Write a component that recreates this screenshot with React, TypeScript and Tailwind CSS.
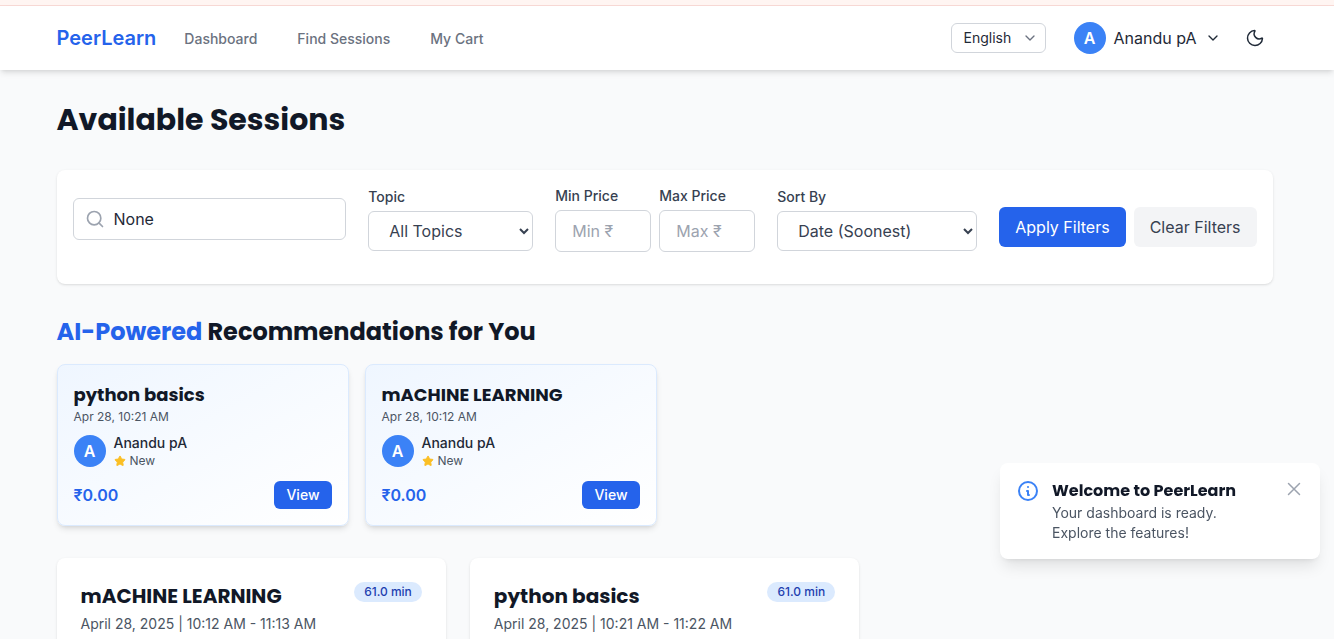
import React from "react";
import { ChevronDown, Moon, Search, Star } from "lucide-react";

const heading = "font-[family-name:Poppins,Inter,sans-serif] font-bold text-[#111827]";
const label = "mb-1 block text-sm font-medium text-[#374151]";
const field = "w-full rounded-md border border-[#d1d5db] bg-white px-4 text-base text-[#374151]";

function Avatar() {
  return (
    <span className="flex size-8 shrink-0 items-center justify-center rounded-full bg-[#3b82f6] text-base font-semibold text-white">
      A
    </span>
  );
}

function Header() {
  return (
    <header className="relative bg-white shadow-[0_4px_6px_-1px_rgba(0,0,0,0.1),0_2px_4px_-2px_rgba(0,0,0,0.1)]">
      <div className="pr-[5px]">
        <div className="mx-auto flex h-16 max-w-7xl items-center px-8">
          <a href="#home" className="text-xl font-semibold text-[#2563eb]">
            PeerLearn
          </a>
          <nav className="ml-7 flex gap-10 pt-0.5 text-sm font-medium text-[#6b7280]">
            <a href="#dashboard">Dashboard</a>
            <a href="#sessions">Find Sessions</a>
            <a href="#cart">My Cart</a>
          </nav>
          <div className="ml-auto flex items-center">
            <div className="grid items-center">
              <select
                aria-label="Language"
                defaultValue="English"
                className="col-start-1 row-start-1 h-[30px] w-[95px] appearance-none rounded-md border border-[#d1d5db] bg-white pl-3 text-sm text-[#1f2937]"
              >
                <option>English</option>
                <option>Hindi</option>
              </select>
              <ChevronDown className="pointer-events-none col-start-1 row-start-1 mr-2 size-4 justify-self-end text-[#6b7280]" />
            </div>
            <button type="button" className="ml-7 flex items-center gap-2 text-base text-[#1f2937]">
              <Avatar />
              <span>Anandu pA</span>
              <ChevronDown className="size-4" />
            </button>
            <button type="button" aria-label="Toggle dark mode" className="ml-4 p-2 text-[#1f2937]">
              <Moon className="size-5" strokeWidth={1.75} />
            </button>
          </div>
        </div>
      </div>
    </header>
  );
}

function Filters() {
  return (
    <form className="mt-8 rounded-lg bg-white p-4 shadow-[0_1px_3px_0_rgba(0,0,0,0.1),0_1px_2px_-1px_rgba(0,0,0,0.1)]">
      <div className="flex items-center gap-[22px] pb-4">
        <div className="grid flex-1 items-center">
          <input
            aria-label="Search sessions"
            defaultValue="None"
            className="col-start-1 row-start-1 h-[42px] w-full min-w-0 rounded-md border border-[#d1d5db] bg-white pl-10 text-base text-[#1f2937]"
          />
          <Search className="pointer-events-none col-start-1 row-start-1 ml-3 size-5 text-[#9ca3af]" />
        </div>
        <div className="w-[165px]">
          <label htmlFor="topic" className={label}>Topic</label>
          <select id="topic" className={`${field} h-10`}>
            <option>All Topics</option>
          </select>
        </div>
        <div className="flex gap-2">
          <div className="w-24">
            <label htmlFor="min" className={label}>Min Price</label>
            <input id="min" placeholder="Min ₹" className={`${field} h-[42px] placeholder:text-[#9ca3af]`} />
          </div>
          <div className="w-24">
            <label htmlFor="max" className={label}>Max Price</label>
            <input id="max" placeholder="Max ₹" className={`${field} h-[42px] placeholder:text-[#9ca3af]`} />
          </div>
        </div>
        <div className="w-[200px]">
          <label htmlFor="sort" className={label}>Sort By</label>
          <select id="sort" className={`${field} h-10`}>
            <option>Date (Soonest)</option>
          </select>
        </div>
        <div className="flex gap-2 pt-4">
          <button type="button" className="rounded-md bg-[#2563eb] px-4 py-2 text-base text-white">
            Apply Filters
          </button>
          <button type="button" className="rounded-md bg-[#f3f4f6] px-4 py-2 text-base text-[#374151]">
            Clear Filters
          </button>
        </div>
      </div>
    </form>
  );
}

function Recommendation({ title, date }: { title: string; date: string }) {
  return (
    <article className="rounded-lg border border-[#dbeafe] bg-linear-to-br/srgb from-[#eff6ff] to-white p-4 shadow-[0_4px_6px_-1px_rgba(0,0,0,0.1),0_2px_4px_-2px_rgba(0,0,0,0.1)]">
      <h3 className={`${heading} text-lg leading-7`}>{title}</h3>
      <p className="text-xs text-[#4b5563]">{date}</p>
      <div className="mt-2 flex items-center gap-2">
        <Avatar />
        <div>
          <p className="text-sm font-medium text-[#1f2937]">Anandu pA</p>
          <p className="flex items-center gap-1 text-xs text-[#4b5563]">
            <Star className="size-3 fill-current text-[#fbbf24]" aria-hidden="true" />
            New
          </p>
        </div>
      </div>
      <div className="mt-3 flex items-center justify-between">
        <span className="text-base font-semibold text-[#2563eb]">₹0.00</span>
        <button type="button" className="rounded-md bg-[#2563eb] px-3 py-1 text-sm font-medium text-white">
          View
        </button>
      </div>
    </article>
  );
}

function Session({ title, time }: { title: string; time: string }) {
  return (
    <article className="h-64 rounded-lg bg-white p-6 shadow-[0_1px_3px_0_rgba(0,0,0,0.1),0_1px_2px_-1px_rgba(0,0,0,0.1)]">
      <div className="flex items-start justify-between">
        <h3 className={`${heading} text-xl leading-7`}>{title}</h3>
        <span className="rounded-full bg-[#dbeafe] px-2.5 py-0.5 text-xs font-medium text-[#1e40af]">61.0 min</span>
      </div>
      <p className="mt-1 text-sm text-[#4b5563]">{time}</p>
    </article>
  );
}

function Toast() {
  return (
    <div
      role="status"
      className="fixed right-3.5 bottom-20 flex w-80 items-start rounded-lg bg-white p-4 shadow-[0_10px_15px_-3px_rgba(0,0,0,0.1),0_4px_6px_-4px_rgba(0,0,0,0.1)]"
    >
      <svg viewBox="0 0 24 24" className="size-6 shrink-0 fill-none stroke-[#3b82f6] stroke-2" strokeLinecap="round" strokeLinejoin="round" aria-hidden="true">
        <path d="M13 16h-1v-4h-1m1-4h.01M21 12a9 9 0 11-18 0 9 9 0 0118 0z" />
      </svg>
      <div className="ml-3 flex-1">
        <p className={`${heading} text-base leading-6`}>Welcome to PeerLearn</p>
        <p className="text-sm text-[#4b5563]">
          Your dashboard is ready.
          <br />
          Explore the features!
        </p>
      </div>
      <button type="button" aria-label="Close" className="text-[#9ca3af]">
        <svg viewBox="0 0 20 20" className="size-5 fill-none stroke-current stroke-[1.5]" strokeLinecap="round" aria-hidden="true">
          <path d="M4.5 4.5l11 11M15.5 4.5l-11 11" />
        </svg>
      </button>
    </div>
  );
}

export default function App() {
  return (
    <div className="h-screen overflow-hidden bg-[#f9fafb] font-[family-name:Inter,sans-serif]">
      <div className="h-1.5 border-b border-[#f8d9d5] bg-[#fff5f2]" />
      <Header />
      <div className="pr-[5px]">
        <main className="mx-auto max-w-7xl px-8 pt-8">
          <h1 className={`${heading} text-3xl leading-9`}>Available Sessions</h1>
          <Filters />
          <section className="mt-8">
            <h2 className={`${heading} text-2xl leading-8`}>
              <span className="text-[#2563eb]">AI-Powered</span> Recommendations for You
            </h2>
            <div className="mt-4 grid grid-cols-4 gap-4">
              <Recommendation title="python basics" date="Apr 28, 10:21 AM" />
              <Recommendation title="mACHINE LEARNING" date="Apr 28, 10:12 AM" />
            </div>
          </section>
          <section className="mt-8 grid grid-cols-3 gap-6">
            <Session title="mACHINE LEARNING" time="April 28, 2025 | 10:12 AM - 11:13 AM" />
            <Session title="python basics" time="April 28, 2025 | 10:21 AM - 11:22 AM" />
          </section>
        </main>
      </div>
      <Toast />
    </div>
  );
}
